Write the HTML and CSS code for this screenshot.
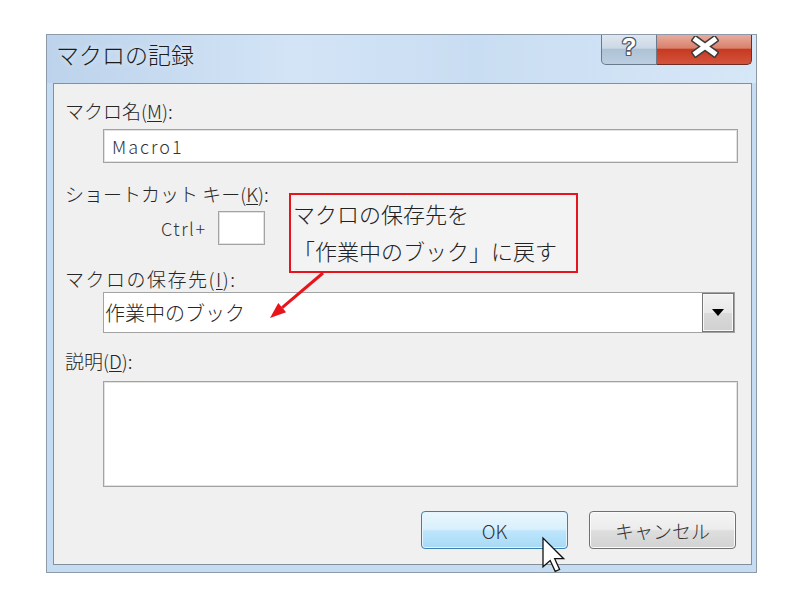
FILE: index.html
```html
<!DOCTYPE html>
<html lang="ja">
<head>
<meta charset="utf-8">
<title>マクロの記録</title>
<link rel="stylesheet" href="styles.css">
</head>
<body>
<div class="window">
  <div class="titlebar">
    <span class="title">マクロの記録</span>
    <div class="caption-buttons">
      <div class="cap-btn help"><span class="help-glyph">?</span></div>
      <div class="cap-btn close">
        <svg class="close-x" width="28" height="22" viewBox="0 0 28 22">
          <path d="M5 4 L23 17 M23 4 L5 17" stroke="#3b3b3b" stroke-width="8" stroke-linecap="square" fill="none"/>
          <path d="M5 4 L23 17 M23 4 L5 17" stroke="#ffffff" stroke-width="5" stroke-linecap="square" fill="none"/>
        </svg>
      </div>
    </div>
  </div>
  <div class="panel">
    <div class="label">マクロ名(<u>M</u>):</div>
    <div class="field name-field">Macro1</div>
    <div class="label l2">ショートカット キー(<u>K</u>):</div>
    <div class="ctrl-row"><span class="ctrl-label">Ctrl+</span><span class="keybox"></span></div>
    <div class="label l3">マクロの保存先(<u>I</u>):</div>
    <div class="combo">
      <span class="combo-text">作業中のブック</span>
      <span class="combo-btn">
        <svg width="12" height="7" viewBox="0 0 12 7"><path d="M0 0 H12 L6 7 Z" fill="#000"/></svg>
      </span>
    </div>
    <div class="label l4">説明(<u>D</u>):</div>
    <div class="field desc-field"></div>
    <div class="buttons">
      <div class="btn ok">OK</div>
      <div class="btn cancel">キャンセル</div>
    </div>
    <div class="callout">マクロの保存先を<br>「作業中のブック」に戻す</div>
    <svg class="arrow" width="80" height="65" viewBox="0 0 80 65">
      <path d="M63 8 L22.2 42.6" stroke="#e8141c" stroke-width="3" fill="none"/>
      <path d="M10 53 L26.1 47.2 L18.3 38 Z" fill="#e8141c"/>
    </svg>
    <svg class="cursor" width="26" height="38" viewBox="0 0 26 38">
      <path d="M1 1 L1 29.8 L8.2 23.5 L13.2 34.3 L17.6 32.5 L12.7 21.7 L21.7 21.7 Z" fill="#ffffff" stroke="#111" stroke-width="1.3" stroke-linejoin="miter"/>
    </svg>
  </div>
</div>
</body>
</html>
```
FILE: styles.css
```css
html, body {
  margin: 0;
  padding: 0;
  background: #ffffff;
}

body {
  font-family: "Noto Sans CJK JP", "Noto Sans", sans-serif;
  font-weight: 300;
  color: #262626;
}

.window {
  margin: 34px 0 0 46px;
  width: 711px;
  height: 539px;
  box-sizing: border-box;
  border: 1px solid #8c9aaa;
  background: #c6dcf2;
  padding: 0 4px 7px 6px;
  display: flex;
  flex-direction: column;
}

.titlebar {
  height: 48px;
  flex: none;
  display: flex;
  align-items: flex-start;
  margin: 0 -4px 0 -6px;
  padding: 0 4px 0 9px;
  background: linear-gradient(90deg, #bcd3eb 0%, #d3e4f6 35%, #c9ddf2 60%, #d6e7f7 100%);
}

.title {
  font-size: 23px;
  line-height: 30px;
  margin-top: 4px;
  color: #1c1c1c;
  text-shadow: 0 0 6px rgba(255, 255, 255, 0.8);
}

.caption-buttons {
  margin-left: auto;
  display: flex;
  height: 30px;
}

.cap-btn {
  height: 30px;
  box-sizing: border-box;
  display: flex;
  align-items: center;
  justify-content: center;
}

.help {
  width: 56px;
  border: 1px solid #6a7a8d;
  border-top: none;
  border-bottom-left-radius: 5px;
  background: linear-gradient(180deg, #dfe7f0 0%, #cbd8e5 45%, #aec2d6 50%, #bccfe1 100%);
}

.help-glyph {
  font-family: "Liberation Sans", sans-serif;
  font-weight: bold;
  font-size: 24px;
  line-height: 24px;
  color: #ffffff;
  margin-top: -6px;
  text-shadow: 1px 0 0 #4b5a6b, -1px 0 0 #4b5a6b, 0 1px 0 #4b5a6b, 0 -1px 0 #4b5a6b,
               1px 1px 0 #4b5a6b, -1px -1px 0 #4b5a6b, 1px -1px 0 #4b5a6b, -1px 1px 0 #4b5a6b;
}

.close {
  width: 95px;
  border: 1px solid #6e2c22;
  border-top: none;
  border-left: none;
  border-bottom-right-radius: 5px;
  background: linear-gradient(180deg, #e7ab9d 0%, #d9816d 45%, #c63a22 50%, #d5533b 100%);
}

.close-x {
  margin-top: -6px;
  margin-left: 2px;
}

.panel {
  position: relative;
  width: 699px;
  height: 482px;
  box-sizing: border-box;
  border: 1px solid #83909c;
  background: #f0f0f0;
  padding: 15px 13px 0 11px;
}

.label {
  font-size: 19px;
  line-height: 24px;
  height: 24px;
  white-space: nowrap;
}

.label u {
  text-underline-offset: 2px;
}

.l2 { margin-top: 19px; }
.l3 { margin-top: 22px; letter-spacing: 1.5px; }
.l4 { margin-top: 16px; }

.field {
  margin-left: 38px;
  box-sizing: border-box;
  border: 1px solid #a3a3a3;
  box-shadow: inset 0 0 0 1px #e2e2e2;
  background: #ffffff;
}

.name-field {
  margin-top: 6px;
  height: 34px;
  padding-left: 8px;
  font-size: 18px;
  line-height: 32px;
  letter-spacing: 2px;
  color: #333333;
}

.ctrl-row {
  margin-top: 5px;
  display: flex;
  align-items: center;
  padding-left: 96px;
  height: 34px;
}

.ctrl-label {
  width: 57px;
  font-size: 18px;
  letter-spacing: 1.5px;
  color: #333333;
}

.keybox {
  width: 47px;
  height: 34px;
  box-sizing: border-box;
  border: 1px solid #a3a3a3;
  box-shadow: inset 0 0 0 1px #e2e2e2;
  background: #ffffff;
}

.combo {
  margin-top: 1px;
  margin-left: 38px;
  width: 632px;
  height: 41px;
  box-sizing: border-box;
  border: 1px solid #a3a3a3;
  background: #ffffff;
  display: flex;
  align-items: center;
}

.combo-text {
  padding-left: 1px;
  font-size: 20px;
  line-height: 28px;
}

.combo-btn {
  margin-left: auto;
  width: 32px;
  height: 39px;
  box-sizing: border-box;
  border: 1px solid #777777;
  box-shadow: inset 0 0 0 1px #f8f8f8;
  background: linear-gradient(180deg, #f2f2f2 0%, #e8e8e8 50%, #dadada 51%, #d0d0d0 100%);
  display: flex;
  align-items: center;
  justify-content: center;
}

.desc-field {
  margin-top: 8px;
  height: 106px;
}

.buttons {
  margin-top: 24px;
  display: flex;
  justify-content: flex-end;
  gap: 21px;
  padding-right: 2px;
}

.btn {
  width: 147px;
  height: 38px;
  box-sizing: border-box;
  border-radius: 4px;
  display: flex;
  align-items: center;
  justify-content: center;
  font-size: 19px;
  color: #333333;
}

.ok {
  border: 1px solid #3c7fb1;
  box-shadow: inset 0 0 0 1px #e6f5fd;
  background: linear-gradient(180deg, #eaf6fd 0%, #d9f0fc 48%, #bee6fd 52%, #a7d9f5 100%);
}

.cancel {
  border: 1px solid #707070;
  box-shadow: inset 0 0 0 1px #fbfbfb;
  background: linear-gradient(180deg, #f4f4f4 0%, #ececec 48%, #dedede 52%, #d2d2d2 100%);
}

.callout {
  position: absolute;
  left: 235px;
  top: 109px;
  width: 289px;
  height: 80px;
  box-sizing: border-box;
  border: 2px solid #e8141c;
  background: #f3f3f3;
  padding-left: 2px;
  font-size: 22px;
  line-height: 37px;
  white-space: nowrap;
  color: #222222;
}

.arrow {
  position: absolute;
  left: 206px;
  top: 181px;
  overflow: visible;
}

.cursor {
  position: absolute;
  left: 488px;
  top: 453px;
  overflow: visible;
}
```
